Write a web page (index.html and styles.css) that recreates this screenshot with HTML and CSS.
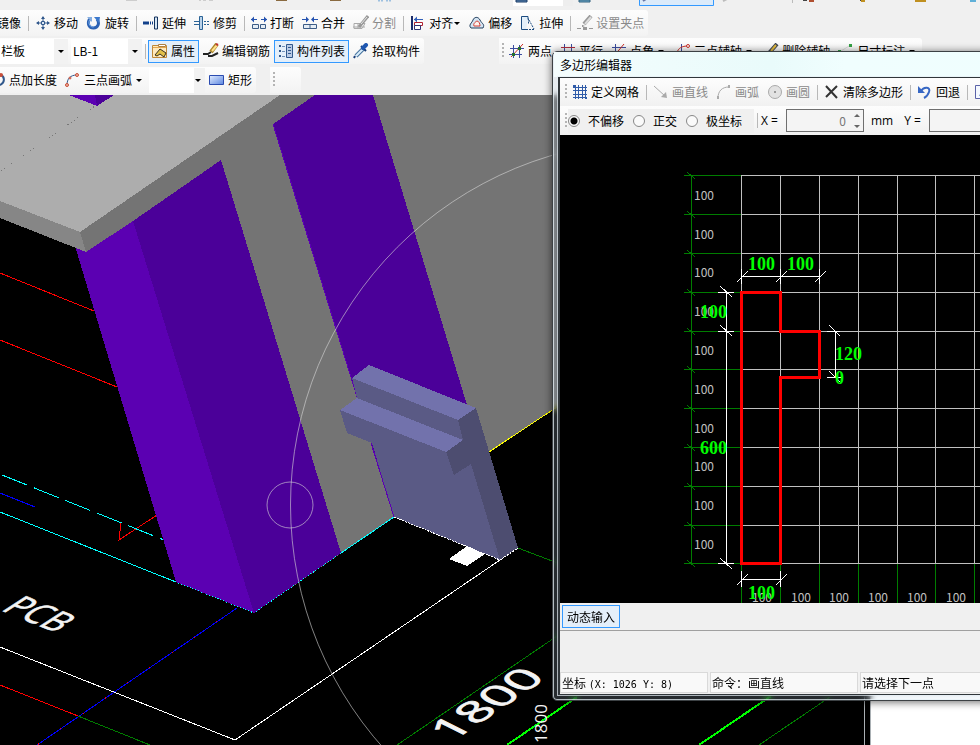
FILE: index.html
```html
<!DOCTYPE html>
<html lang="zh-CN">
<head>
<meta charset="utf-8">
<title>多边形编辑器</title>
<link rel="stylesheet" href="styles.css">
</head>
<body>
<div class="app">
  <header class="bars">
    <div class="row row-top" aria-hidden="true">
      <svg class="top-strip" width="980" height="9">
        <path d="M126 0h11M199 0h2M203 0h3M209 0h4" stroke="#aaa"/>
        <path d="M276 0h11M330 0h11" stroke="#8a6a40" stroke-width="2"/>
        <path d="M379 1.500v-2h3v2M387 1.500v-2h3v2" stroke="#4a90d0" fill="none"/>
        <path d="M513 0h60v6h-60z" fill="#fff"/><path d="M563 0h10v6h-10z" fill="#eee"/>
        <path d="M516 0h11v2h-11z" fill="#5f8ab8" stroke="#1d3d66"/>
        <path d="M579 0h11v2h-11z" fill="#6fa8c8" stroke="#31617f"/>
        <path d="M639.500 -2h74v7.500h-74z" fill="#dcebfa" stroke="#3399ff"/>
        <path d="M643 1l3-2" stroke="#6878a8" stroke-width="2"/>
        <path d="M723 1l4-2" stroke="#bbb" stroke-width="2"/><path d="M792.500 0v3" stroke="#bbb"/>
        <path d="M803 0h4M860 0h4" stroke="#444" stroke-width="2"/><path d="M809 1h5" stroke="#b05030" stroke-width="2"/>
        <path d="M861 1h4M915 1h11" stroke="#c09020" stroke-width="2"/><path d="M970 1h6" stroke="#60b0d8" stroke-width="2"/>
      </svg>
    </div>

    <div class="row">
      <div class="toolbar cut-text" role="toolbar">
        <button class="tool">镜像</button>
        <span class="sep"></span>
        <button class="tool"><svg viewBox="0 0 16 16"><path d="M8 2v12M2 8h12" stroke="#31588c" fill="none"/><path d="M8 1l2 3H6zM8 15l2-3H6zM1 8l3-2v4zM15 8l-3-2v4z" fill="#31588c"/><path d="M6.500 6.500h3v3h-3z" fill="#dce8f5" stroke="#31588c"/></svg>移动</button>
        <button class="tool"><svg viewBox="0 0 16 16"><path d="M3.500 4C1 9 3 13 7.500 13S14 8 11 4" stroke="#2c62b4" stroke-width="3" fill="none"/><path d="M3.500 5C2 9 4 12 7.500 12" stroke="#83b4ee" fill="none"/><path d="M8 2l6 0-1 6z" fill="#3b78cc"/><path d="M1 2h5v5z" fill="#86aee0"/></svg>旋转</button>
        <span class="sep"></span>
        <button class="tool"><svg viewBox="0 0 16 16"><path d="M0 8h6" stroke="#12408a" stroke-width="3"/><path d="M7 8h4" stroke="#12408a" stroke-width="3" stroke-dasharray="1 1"/><path d="M11.500 2v12h3V2z" fill="#d6e6f4" stroke="#14335e"/></svg>延伸</button>
        <button class="tool"><svg viewBox="0 0 16 16"><path d="M5.500 1.500h3v13h-3z" fill="#b9d2ea" stroke="#2b6396"/><path d="M0 6.500h5M0 9.500h5" stroke="#2b6396"/><path d="M10 6.500h6M10 9.500h6" stroke="#2b6396" stroke-dasharray="2 1"/></svg>修剪</button>
        <span class="sep"></span>
        <button class="tool"><svg viewBox="0 0 16 16"><path d="M0 4.500h6M10 4.500h6" stroke="#2553b0"/><path d="M0 4.500l3-3v6zM16 4.500l-3-3v6z" fill="#2553b0"/><path d="M1.500 9.500h6v4h-6zM9.500 9.500h5v4h-5z" fill="#e5edf5" stroke="#3c5c86"/></svg>打断</button>
        <button class="tool"><svg viewBox="0 0 16 16"><path d="M0 4.500h5M11 4.500h5" stroke="#2553b0"/><path d="M7 4.500l-3-3v6zM9 4.500l3-3v6z" fill="#2553b0"/><path d="M1.500 9.500h13v4h-13zM8 9v5" fill="#e5edf5" stroke="#3c5c86"/></svg>合并</button>
        <button class="tool" disabled><svg viewBox="0 0 16 16"><path d="M1 8.500h11l-3 5H1zM5 8v6M0 12h12" fill="none" stroke="#aaa"/><path d="M15 1L6 12" stroke="#999" stroke-width="3"/><path d="M14 2L8 9" stroke="#e5e5e5"/></svg>分割</button>
        <span class="sep"></span>
        <button class="tool"><svg viewBox="0 0 16 16"><path d="M2 1v14" stroke="#1b2c6b" stroke-width="2"/><path d="M4 4.500h9" stroke="#315fb8"/><path d="M4 4.500l3-3v6z" fill="#315fb8"/><path d="M4.500 7.500h8v3h-8z" fill="#fff" stroke="#b02030"/><path d="M4.500 10.500h6v4h-6z" fill="#fff" stroke="#303070"/></svg>对齐<i class="caret tight"></i></button>
        <button class="tool"><svg viewBox="0 0 16 16"><path d="M2 13C-1 10 3 8 4 5s5-4 7 0 5 4 3 8z" fill="#d4e4f2" stroke="#24405f"/><path d="M5 11c-1-2 1-4 3-5 2 0 3 3 3 5z" fill="#fff3ee" stroke="#d23b32"/></svg>偏移</button>
        <button class="tool"><svg viewBox="0 0 16 16"><path d="M6 14.500H1.500v-13H8v3" fill="#e3eff9" stroke="#1b4b80"/><path d="M8.500 3.500v6M9 5l5 9M6 14.500h9" stroke="#1b4b80" stroke-dasharray="2 1" fill="none"/></svg>拉伸</button>
        <span class="sep"></span>
        <button class="tool" disabled><svg viewBox="0 0 16 16"><path d="M14 1L7 9" stroke="#999" stroke-width="4"/><path d="M14 2L8 9" stroke="#ddd" stroke-width="2"/><path d="M5 10l3 1-3 1z" fill="#888"/><path d="M0 13.500h4M12 13.500h4" stroke="#999"/><path d="M6 12h4v3H6z" fill="#999"/></svg>设置夹点</button>
      </div>
    </div>

    <div class="row">
      <div class="toolbar" role="toolbar">
        <label class="combo wide"><select aria-label="构件类型"><option>栏板</option></select></label>
        <label class="combo named"><select aria-label="构件名称"><option>LB-1</option></select></label>
        <span class="sep"></span>
        <button class="tool on"><svg viewBox="0 0 16 16"><path d="M.5 2.500h14v12H.5z" fill="#ffe9bb" stroke="#c08838"/><path d="M6.500 1.500h7v2h-7z" fill="#fff" stroke="#b08040"/><path d="M1 4.500h13" stroke="#e3a64e"/><path d="M3 12l5-6 6 4-2 4-4-3-3 2z" fill="#e2c04a" stroke="#383020"/></svg>属性</button>
        <button class="tool"><svg viewBox="0 0 16 16"><path d="M0 11h5l3-2M5 13h4l6-3" stroke="#222" stroke-width="2" fill="none"/><path d="M14 1L8 9" stroke="#a98428" stroke-width="4"/><path d="M14 2L9 8" stroke="#ffe08a" stroke-width="2"/><path d="M13 1l2 1" stroke="#c03030" stroke-width="2"/></svg>编辑钢筋</button>
        <button class="tool on"><svg viewBox="0 0 16 16"><path d="M1 3h2M1 8h2M1 13h2" stroke="#31588c" stroke-width="2"/><path d="M4 3.500h3M4 8.500h3M4 13.500h3" stroke="#6f8fb8"/><path d="M8.500 1.500h6v13h-6z" fill="#b9cbe6" stroke="#31588c"/><path d="M10 4.500h3M10 7.500h3M10 10.500h3" stroke="#31588c"/></svg>构件列表</button>
        <button class="tool"><svg viewBox="0 0 16 16"><path d="M3 13l7-7" stroke="#45739f" stroke-width="4"/><path d="M3 13l7-7" stroke="#d9edfb" stroke-width="2"/><path d="M8 3l5 5" stroke="#163b78" stroke-width="2"/><path d="M10 5l3-3" stroke="#1f57b0" stroke-width="4" stroke-linecap="round"/><path d="M1 15l1-2" stroke="#163b78" stroke-width="2"/></svg>拾取构件</button>
      </div>
      <div class="toolbar axis" role="toolbar">
        <span class="grip"></span>
        <button class="tool"><svg viewBox="0 0 16 16"><path d="M4.500 2v13M10.500 2v13M1 5.500h14M0 11.500h13" stroke="#3c4da0"/><path d="M2 14L14 1" stroke="#cc3028"/><path d="M3 10h3v3H3zM9 4h3v3H9z" fill="#28702c"/></svg>两点</button>
        <button class="tool"><svg viewBox="0 0 16 16"><path d="M4.500 1v13M11.500 1v13" stroke="#3c4da0"/><path d="M1 4.500h14M1 9.500h14" stroke="#b03040"/></svg>平行</button>
        <button class="tool"><svg viewBox="0 0 16 16"><path d="M4.500 1v13M1 4.500h14M1 10.500h14" stroke="#3c4da0"/><path d="M3 13L13 1" stroke="#cc3028"/></svg>点角<i class="caret"></i></button>
        <button class="tool"><svg viewBox="0 0 16 16"><path d="M6.500 1v14M0 9.500h14" stroke="#3c4da0"/><path d="M2 10c1-5 5-7 11-7" stroke="#cc3028" fill="none"/><circle cx="13" cy="3" r="1.500" fill="#fff" stroke="#cc3028"/></svg>三点辅轴<i class="caret"></i></button>
        <button class="tool"><svg viewBox="0 0 16 16"><path d="M14 1L6 10" stroke="#3b4252" stroke-width="4"/><path d="M13 2L8 8" stroke="#e3bb3e" stroke-width="2"/><path d="M2 10h6" stroke="#3c6db0" stroke-width="2"/></svg>删除辅轴</button>
        <button class="tool"><svg viewBox="0 0 16 16"><path d="M0 7h3v3H0zM11 1h3v3h-3z" fill="#35a245"/><path d="M3 8l8-5" stroke="#ddd"/></svg>尺寸标注<i class="caret"></i></button>
      </div>
    </div>

    <div class="row">
      <div class="toolbar cut-icon" role="toolbar">
        <button class="tool"><svg viewBox="0 0 16 16"><path d="M11 3c4 2 4 8-1 10" stroke="#31588c" fill="none" stroke-width="2"/><circle cx="11" cy="3" r="2" fill="#c8503c"/></svg>点加长度</button>
        <button class="tool"><svg viewBox="0 0 16 16"><path d="M2 13C2 7 5 3 12 3" stroke="#31588c" fill="none"/><circle cx="2" cy="13" r="1.500" fill="#f1b49f" stroke="#c8503c"/><circle cx="5" cy="6" r="1" fill="#f1b49f" stroke="#c8503c"/><circle cx="12" cy="3" r="1.500" fill="#f1b49f" stroke="#c8503c"/></svg>三点画弧<i class="caret"></i></button>
        <label class="combo small"><select aria-label="画弧方式"><option></option></select></label>
        <button class="tool"><svg viewBox="0 0 16 16"><defs><linearGradient id="rect" x2="1" y2="1"><stop stop-color="#e2edff"/><stop offset="1" stop-color="#5c86e0"/></linearGradient></defs><path d="M.5 3.500h14v9H.5z" fill="url(#rect)" stroke="#2a4bb0"/></svg>矩形</button>
      </div>
      <div class="toolbar spare"><span class="grip"></span></div>
    </div>
  </header>

  <main class="viewport">
    <svg class="scene" width="100%" height="100%" role="img" aria-label="三维模型">
      <g transform="translate(0 -95)" fill="none" shape-rendering="crispEdges">
        <g stroke="#f00">
          <path d="M0 273L94 311M0 340L117 387M121 522L119 540L157 515M0 685L78 716"/>
        </g>
        <path d="M0 493L35 507M237 608L37 745" stroke="#00f"/>
        <path d="M237 608L37 745" stroke="#f00" stroke-dasharray="1 26" stroke-dashoffset="3"/>
        <path d="M78 716L150 745M397 745L560 634M518 548L560 564M759 745L830 697" stroke="#007d00"/>
        <path d="M507 745L577 697M699 745L771 696" stroke="#0f0" stroke-width="2"/>
        <path d="M2 475L164 540" stroke="#0ff" stroke-dasharray="27 7"/>
        <path d="M0 512L176 582" stroke="#0ff"/>

        <path d="M280 95H560V405L490 452L394 517L254 613L80 232z" fill="#747474"/>
        <path d="M0 95H280L80 232L0 201z" fill="#adadad"/>
        <path d="M75 246L133 221L254 613L176 582z" fill="#5b00b2"/>
        <path d="M80 232L86 252L133 221V200z" fill="#747474"/>
        <path d="M0 201L80 232L86 252L0 218z" fill="#868686"/>
        <path d="M133 221L221 160L341 553L254 613z" fill="#4b0099"/>
        <path d="M273 124L315 95H373L470 415L394 517z" fill="#4b0099"/>
        <path d="M273 124L394 517" stroke="#5b00b2"/>
        <path d="M69 95H95L97 106z" fill="#5b00b2"/><path d="M95 95H114L97 106z" fill="#4b0099"/>
        <path d="M1 171L95 106" stroke="#777" stroke-dasharray="1 3 1 3 1 3 1 14"/>

        <path d="M340 410L347 433L372 443L394 517L500 560L471 464L454 475L446 452L463 440L458 420L352 378L357 398z" fill="#5a5a85"/>
        <path d="M371 443L394 517" stroke="#5b00b2"/>
        <path d="M369 365L476 408L458 420L352 378zM357 398L463 440L446 452L340 410z" fill="#7272ac"/>
        <path d="M458 420L476 408L518 548L500 560L471 464L454 475L446 452L463 440z" fill="#4d4d70"/>

        <path d="M449 559L467 546L485 554L467 566z" fill="#fff"/>
        <path d="M394 517L500 560L518 548" stroke="#fff" stroke-dasharray="2 1"/>
        <path d="M500 560L235 740L0 647" stroke="#fff"/>
        <path d="M560 405L489 452" stroke="#ff0"/>
        <path d="M394 517L341 553" stroke="#0ff"/>
        <path d="M341 553L254 613L176 582" stroke="#0ff" stroke-dasharray="1 2"/>
        <g stroke="#d8d8d8" stroke-opacity=".6" shape-rendering="auto">
          <circle cx="655" cy="505" r="364.500"/>
          <circle cx="290" cy="505" r="23"/>
        </g>
        <path d="M871 690h800v800H871z" fill="#fff"/>
        <path d="M864.500 690v200M870.500 690v200" stroke="#aab0b4"/>
        <g class="ground">
          <text transform="matrix(.93 .38 -1.02 .66 0 610)" font-size="32" stroke-width=".6">PCB</text>
          <text transform="matrix(.83 -.56 .72 .36 452 742)" font-size="50" stroke-width="1">1800</text>
          <text transform="translate(547 743) rotate(-90)" font-size="17">1800</text>
        </g>
      </g>
    </svg>
  </main>

  <section class="dialog" role="dialog" aria-labelledby="dlg-title">
    <h1 class="title" id="dlg-title">多边形编辑器</h1>
    <div class="client">
      <div class="strip" role="toolbar">
        <span class="grip"></span>
        <button class="tool"><svg viewBox="0 0 16 16"><path d="M3.500 1v14M6.500 1v14M10.500 1v14M13.500 1v14M1 3.500h14M1 6.500h14M1 10.500h14M1 13.500h14" stroke="#2f5ba8"/><path d="M1 1h2v2H1zM13 13h2v2h-2z" fill="#2f5ba8"/></svg>定义网格</button>
        <span class="sep"></span>
        <button class="tool" disabled><svg viewBox="0 0 16 16"><path d="M1 2l11 10" stroke="#aaa"/><path d="M14 14l-6-1 5-5z" fill="#aaa"/></svg>画直线</button>
        <button class="tool" disabled><svg viewBox="0 0 16 16"><path d="M2 14C2 7 6 3 13 3" stroke="#aaa" fill="none"/><path d="M1 12h2v3H1zM12 1h2v3h-2z" fill="#aaa"/></svg>画弧</button>
        <button class="tool" disabled><svg viewBox="0 0 16 16"><circle cx="8" cy="8" r="6.500" fill="#e2e2e2" stroke="#aaa"/><path d="M7 7h2v2H7z" fill="#999"/></svg>画圆</button>
        <span class="sep"></span>
        <button class="tool"><svg viewBox="0 0 16 16"><path d="M2 2l11 12M13 2L2 13" stroke="#333" stroke-width="2"/></svg>清除多边形</button>
        <span class="sep"></span>
        <button class="tool"><svg viewBox="0 0 16 16"><path d="M4 7c3-5 10-4 8 1-1 3-3 5-5 6" fill="none" stroke="#3767c4" stroke-width="2"/><path d="M1 2v7h7z" fill="#3767c4"/></svg>回退</button>
        <span class="sep"></span>
        <button class="tool" aria-label="重做"><svg viewBox="0 0 16 16"><path d="M1.500 1.500h10v13h-10z" fill="#f4f8ff" stroke="#5a62a8"/><path d="M6 12l6-9" stroke="#3767c4" stroke-width="2"/></svg></button>
      </div>
      <div class="strip offsets">
        <span class="grip"></span>
        <div class="modes">
          <label><input type="radio" name="mode" checked>不偏移</label>
          <label><input type="radio" name="mode">正交</label>
          <label><input type="radio" name="mode">极坐标</label>
        </div>
        <span class="sep"></span>
        <label class="axis-name" for="dx">X =</label>
        <span class="spin"><input id="dx" value="0" disabled><i class="steps"></i></span>
        <span class="unit">mm</span>
        <label class="axis-name" for="dy">Y =</label>
        <span class="spin"><input id="dy" value="0" disabled><i class="steps"></i></span>
      </div>

      <div class="sketch">
        <svg width="100%" height="100%" role="img" aria-label="多边形草图">
          <g transform="translate(-560 -135)" fill="none" shape-rendering="crispEdges">
            <path stroke="#007d00" d="M691.500 175V563M684 175.500H741M684 214.500H741M684 253.500H741M684 292.500H741M684 331.500H741M684 369.500H741M684 408.500H741M684 447.500H741M684 486.500H741M684 525.500H741M684 563.500H741M741.500 563V1000M780.500 563V1000M819.500 563V1000M858.500 563V1000M897.500 563V1000M935.500 563V1000M974.500 563V1000"/>
            <path stroke="#007d00" d="M687 172l8 7M687 211l8 7M687 250l8 7M687 289l8 7M687 328l8 7M687 366l8 7M687 405l8 7M687 444l8 7M687 483l8 7M687 522l8 7M687 560l8 7"/>
            <path stroke="#c0c0c0" d="M741 175.500H1130M741 214.500H1130M741 253.500H1130M741 292.500H1130M741 331.500H1130M741 369.500H1130M741 408.500H1130M741 447.500H1130M741 486.500H1130M741 525.500H1130M741 563.500H1130M741.500 175V563M780.500 175V563M819.500 175V563M858.500 175V563M897.500 175V563M935.500 175V563M974.500 175V563"/>
            <g class="grid-label">
              <text x="694" y="200">100</text><text x="694" y="239">100</text><text x="694" y="277">100</text><text x="694" y="316">100</text><text x="694" y="355">100</text><text x="694" y="394">100</text><text x="694" y="433">100</text><text x="694" y="471">100</text><text x="694" y="510">100</text><text x="694" y="549">100</text>
              <text x="752" y="602">100</text><text x="791" y="602">100</text><text x="829" y="602">100</text><text x="868" y="602">100</text><text x="907" y="602">100</text><text x="946" y="602">100</text>
            </g>
            <path stroke="#fff" d="M726.500 292V563M718 292.500h16M718 331.500h16M718 563.500h16M720 286l12 11M720 325l12 11M720 558l12 11M741 276.500H819M741.500 269v15M780.500 269v15M819.500 269v15M737 282l11-11M776 282l11-11M815 282l11-11M835.500 331V377M827 331.500h13M827 377.500h15M829 325l11 11M829 371l11 11M741 579.500H780M741.500 571v16M780.500 571v16M737 585l11-11M776 585l11-11"/>
            <path stroke="#f00" stroke-width="3" d="M741.500 292.500H780.500V331.500H819.500V377.500H780.500V563.500H741.500z"/>
            <g class="dim-label">
              <text x="748" y="270">100</text><text x="787" y="270">100</text><text x="700" y="318">100</text><text x="835" y="360">120</text><text x="835" y="384">0</text><text x="700" y="454">600</text><text x="748" y="599">100</text>
            </g>
          </g>
        </svg>
      </div>

      <div class="input-bar"><button class="tool on">动态输入</button></div>
      <div class="panel"></div>
      <footer class="status">
        <span>坐标 <code>(X: 1026 Y: 8)</code></span>
        <span>命令：画直线</span>
        <span>请选择下一点</span>
      </footer>
    </div>
  </section>
</div>
</body>
</html>
```
FILE: styles.css
```css
* { box-sizing: border-box; }

body {
  margin: 0;
  overflow: hidden;
  background: #f0f0f0;
  color: #000;
  font: 12px/16px "Noto Sans CJK SC", sans-serif;
}

button, select, input { font: inherit; color: inherit; }

.app {
  position: relative;
  display: flex;
  flex-direction: column;
  height: 100vh;
  overflow: hidden;
}

/* Toolbars */
.row { display: flex; height: 28px; align-items: center; }
.row:last-child { height: 30px; }
.row-top { height: 9px; align-items: flex-start; }
.top-strip { display: block; flex: none; }

.toolbar {
  display: flex;
  flex: none;
  align-items: center;
  height: 26px;
  border-radius: 0 3px 3px 0;
  background: linear-gradient(#fdfdfd, #f3f3f3);
}
.cut-text { margin-left: -7px; }
.cut-icon { margin-left: -14px; }
.axis { margin-left: 75px; }
.spare { width: 31px; margin-left: 14px; }

.tool {
  display: flex;
  flex: none;
  align-items: center;
  height: 23px;
  padding: 0 3px;
  border: 1px solid transparent;
  background: none;
  white-space: nowrap;
}
.tool svg { width: 16px; height: 16px; margin-right: 3px; flex: none; }
.tool.on { border-color: #3399ff; background: #e4effa; }
.tool:disabled { color: #8a8a8a; }

.caret { display: flex; justify-content: center; width: 13px; }
.caret.tight { width: 8px; }
.caret::before, .combo::after {
  content: "";
  border: 3px solid transparent;
  border-top-color: #000;
  border-bottom: 0;
}

.sep { flex: none; width: 1px; height: 15px; margin: 0 2px 0 3px; background: #b8b8b8; }

.grip {
  flex: none;
  width: 2px;
  height: 16px;
  margin: 0 1px 0 3px;
  background: repeating-linear-gradient(#b4b4b4 0 2px, transparent 2px 4px);
}

.combo {
  position: relative;
  display: flex;
  align-items: center;
  height: 25px;
  background: linear-gradient(to right, #fff 80%, #f2f2f2 80%);
}
.combo::after { position: absolute; right: 4px; }
.combo select {
  width: 100%;
  padding: 0 0 0 1px;
  border: 0;
  background: none;
  appearance: none;
}
.combo.wide { width: 68px; margin-right: 3px; }
.combo.named { width: 71px; }
.combo.named select { padding-left: 2px; }
.combo.small { width: 56px; }

/* Model view */
.viewport { flex: 1; min-height: 0; background: #000; }
.scene { display: block; }
.ground { fill: #f4f4f4; stroke: #f4f4f4; stroke-width: 0; font-family: "Open Sans", sans-serif; }

/* Polygon editor window */
.dialog {
  position: absolute;
  top: 51px;
  right: -60px;
  bottom: 44px;
  left: 552px;
  display: flex;
  flex-direction: column;
  padding: 0 5px 5px;
  border: 1px solid #3c4144;
  border-radius: 5px;
  background: rgba(190, 215, 235, .2);
  backdrop-filter: blur(3px);
  box-shadow: inset 0 0 0 1px rgba(230, 240, 245, .75), 0 1px 8px rgba(0, 0, 0, .6);
}
.title {
  flex: none;
  height: 25px;
  margin: 0 -4px;
  padding: 4px 6px;
  background: linear-gradient(to right, #f4fdfd, #e9fbfb 45%, #f0fefe 60%, #effefe);
  font-size: 12px;
  font-weight: 400;
  line-height: 17px;
}
.client {
  display: flex;
  flex: 1;
  flex-direction: column;
  min-height: 0;
  border: 1px solid #30363a;
  border-left-width: 2px;
  outline: 1px solid rgba(230, 240, 245, .7);
  background: #f0f0f0;
}
.strip {
  display: flex;
  flex: none;
  align-items: center;
  height: 28px;
  padding-left: 2px;
  background: linear-gradient(#fdfdfd, #f1f1f1);
}
.offsets { height: 29px; }

.modes {
  display: flex;
  gap: 9px;
  align-items: center;
  height: 24px;
  padding-right: 12px;
  background: #f0f0f0;
}
.modes label { display: flex; align-items: center; gap: 8px; }
.modes input {
  width: 12px;
  height: 12px;
  margin: 0;
  border: 1px solid #888;
  border-radius: 50%;
  background: #fafafa;
  appearance: none;
}
.modes input:checked { background: radial-gradient(#000 0 3px, #fafafa 4px); }

.axis-name { margin-right: 8px; font-family: "Open Sans", sans-serif; }
.offsets .sep { margin-right: 3px; }
.unit { margin: 0 11px 0 7px; font-family: "Open Sans", sans-serif; }
.spin {
  display: flex;
  flex: none;
  align-items: center;
  width: 78px;
  height: 23px;
  border: 1px solid #6f6f6f;
  background: #f4f4f4;
}
.spin input {
  flex: 1;
  min-width: 0;
  padding: 0 8px 0 0;
  border: 0;
  background: none;
  color: #777;
  text-align: right;
}
.steps {
  display: flex;
  flex-direction: column;
  justify-content: space-between;
  height: 14px;
  margin-right: 3px;
}
.steps::before, .steps::after { content: ""; border: 3px solid transparent; }
.steps::before { border-top: 0; border-bottom-color: #666; }
.steps::after { border-bottom: 0; border-top-color: #666; }

.sketch { flex: 1; min-height: 0; overflow: hidden; background: #000; }
.sketch svg { display: block; }
.grid-label { fill: #c0c0c0; font: 12px "Noto Sans CJK SC", sans-serif; }
.dim-label { fill: #0f0; font: bold 18px "Liberation Serif", serif; }

.input-bar {
  display: flex;
  flex: none;
  align-items: center;
  height: 28px;
  padding-left: 2px;
  border-bottom: 1px solid #a0a0a0;
}
.input-bar .tool { padding: 0 4px; }
.panel { flex: none; height: 41px; }
.status {
  display: grid;
  flex: none;
  grid-template-columns: 148px 148px 1fr;
  gap: 2px;
  height: 22px;
  padding-bottom: 1px;
}
.status span {
  padding: 2px 1px 0;
  border: 1px solid #d9d9d9;
  background: #f9f9f9;
  white-space: nowrap;
}
.status code { font: 10px "DejaVu Sans Mono", monospace; }
```
